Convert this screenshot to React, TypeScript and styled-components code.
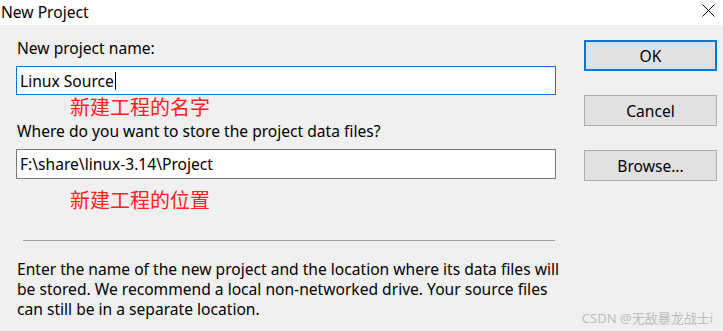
import React from "react";
import styled, { createGlobalStyle } from "styled-components";

const Global = createGlobalStyle`
  html, body { margin: 0; padding: 0; background: #f0f0f0; }
  body { font-family: "Noto Sans", "Noto Sans CJK SC", sans-serif; color: #000; }
`;

const Window = styled.div`
  position: relative;
  width: 723px;
  height: 331px;
  overflow: hidden;
  background: #f0f0f0;
`;

const TitleBar = styled.div`
  height: 25px;
  background: #fff;
  display: flex;
  align-items: center;
  justify-content: space-between;
  padding-left: 1px;
  font-size: 15.6px;
  line-height: 25px;
`;

const CloseBtn = styled.div`
  width: 30px;
  height: 25px;
  display: flex;
  align-items: center;
  justify-content: center;
  margin-top: -5px;
`;

const Body = styled.div`
  display: grid;
  grid-template-columns: 540px 133px;
  column-gap: 28px;
  padding-left: 16px;
`;

const Column = styled.div`
  display: flex;
  flex-direction: column;
`;

const Label = styled.div<{ top: number }>`
  margin-top: ${({ top }) => top}px;
  padding-left: 1px;
  font-size: 15.6px;
  line-height: 20px;
  height: 20px;
  white-space: nowrap;
`;

const Input = styled.div<{ focused?: boolean; top: number; h: number }>`
  box-sizing: border-box;
  margin-top: ${({ top }) => top}px;
  height: ${({ h }) => h}px;
  background: #fff;
  border: 1px solid ${({ focused }) => (focused ? "#0078d7" : "#7a7a7a")};
  padding-left: 3px;
  display: flex;
  align-items: center;
  font-size: 15.6px;
`;

const Caret = styled.span`
  display: inline-block;
  width: 1px;
  height: 18px;
  background: #000;
  margin-left: 1px;
`;

const Note = styled.div<{ top: number }>`
  margin-top: ${({ top }) => top}px;
  padding-left: 54px;
  color: #ff2020;
  font-size: 20px;
  line-height: 26px;
  height: 26px;
`;

const Rule = styled.div`
  margin: 26px 0 0 7px;
  width: 532px;
  height: 1px;
  background: #a0a0a0;
`;

const Para = styled.p`
  margin: 18px 0 0 1px;
  font-size: 15.6px;
  line-height: 20px;
  width: 556px;
`;

const Buttons = styled.div`
  display: flex;
  flex-direction: column;
  gap: 24px;
  padding-top: 15px;
`;

const Button = styled.div<{ primary?: boolean }>`
  box-sizing: border-box;
  height: 31px;
  background: #e1e1e1;
  border: ${({ primary }) => (primary ? "2px solid #0078d7" : "1px solid #adadad")};
  display: flex;
  align-items: center;
  justify-content: center;
  font-size: 15.6px;
`;

const Watermark = styled.div`
  position: absolute;
  right: 10px;
  bottom: 4px;
  font-size: 13px;
  color: #bdbdbd;
`;

export default function App() {
  return (
    <Window>
      <Global />
      <TitleBar>
        <span>New Project</span>
        <CloseBtn>
          <svg width="13" height="13" viewBox="0 0 13 13">
            <path d="M0.5 0.5 L12.5 12.5 M12.5 0.5 L0.5 12.5" stroke="#000" strokeWidth="1" />
          </svg>
        </CloseBtn>
      </TitleBar>
      <Body>
        <Column>
          <Label top={13}>New project name:</Label>
          <Input focused top={8} h={29}>
            Linux Source<Caret />
          </Input>
          <Note top={0}>新建工程的名字</Note>
          <Label top={0}>Where do you want to store the project data files?</Label>
          <Input top={8} h={30}>F:\share\linux-3.14\Project</Input>
          <Note top={9}>新建工程的位置</Note>
          <Rule />
          <Para>
            Enter the name of the new project and the location where its data files will be
            stored. We recommend a local non-networked drive. Your source files can still be in a
            separate location.
          </Para>
        </Column>
        <Buttons>
          <Button primary>OK</Button>
          <Button>Cancel</Button>
          <Button>Browse...</Button>
        </Buttons>
      </Body>
      <Watermark>CSDN @无敌暴龙战士i</Watermark>
    </Window>
  );
}
